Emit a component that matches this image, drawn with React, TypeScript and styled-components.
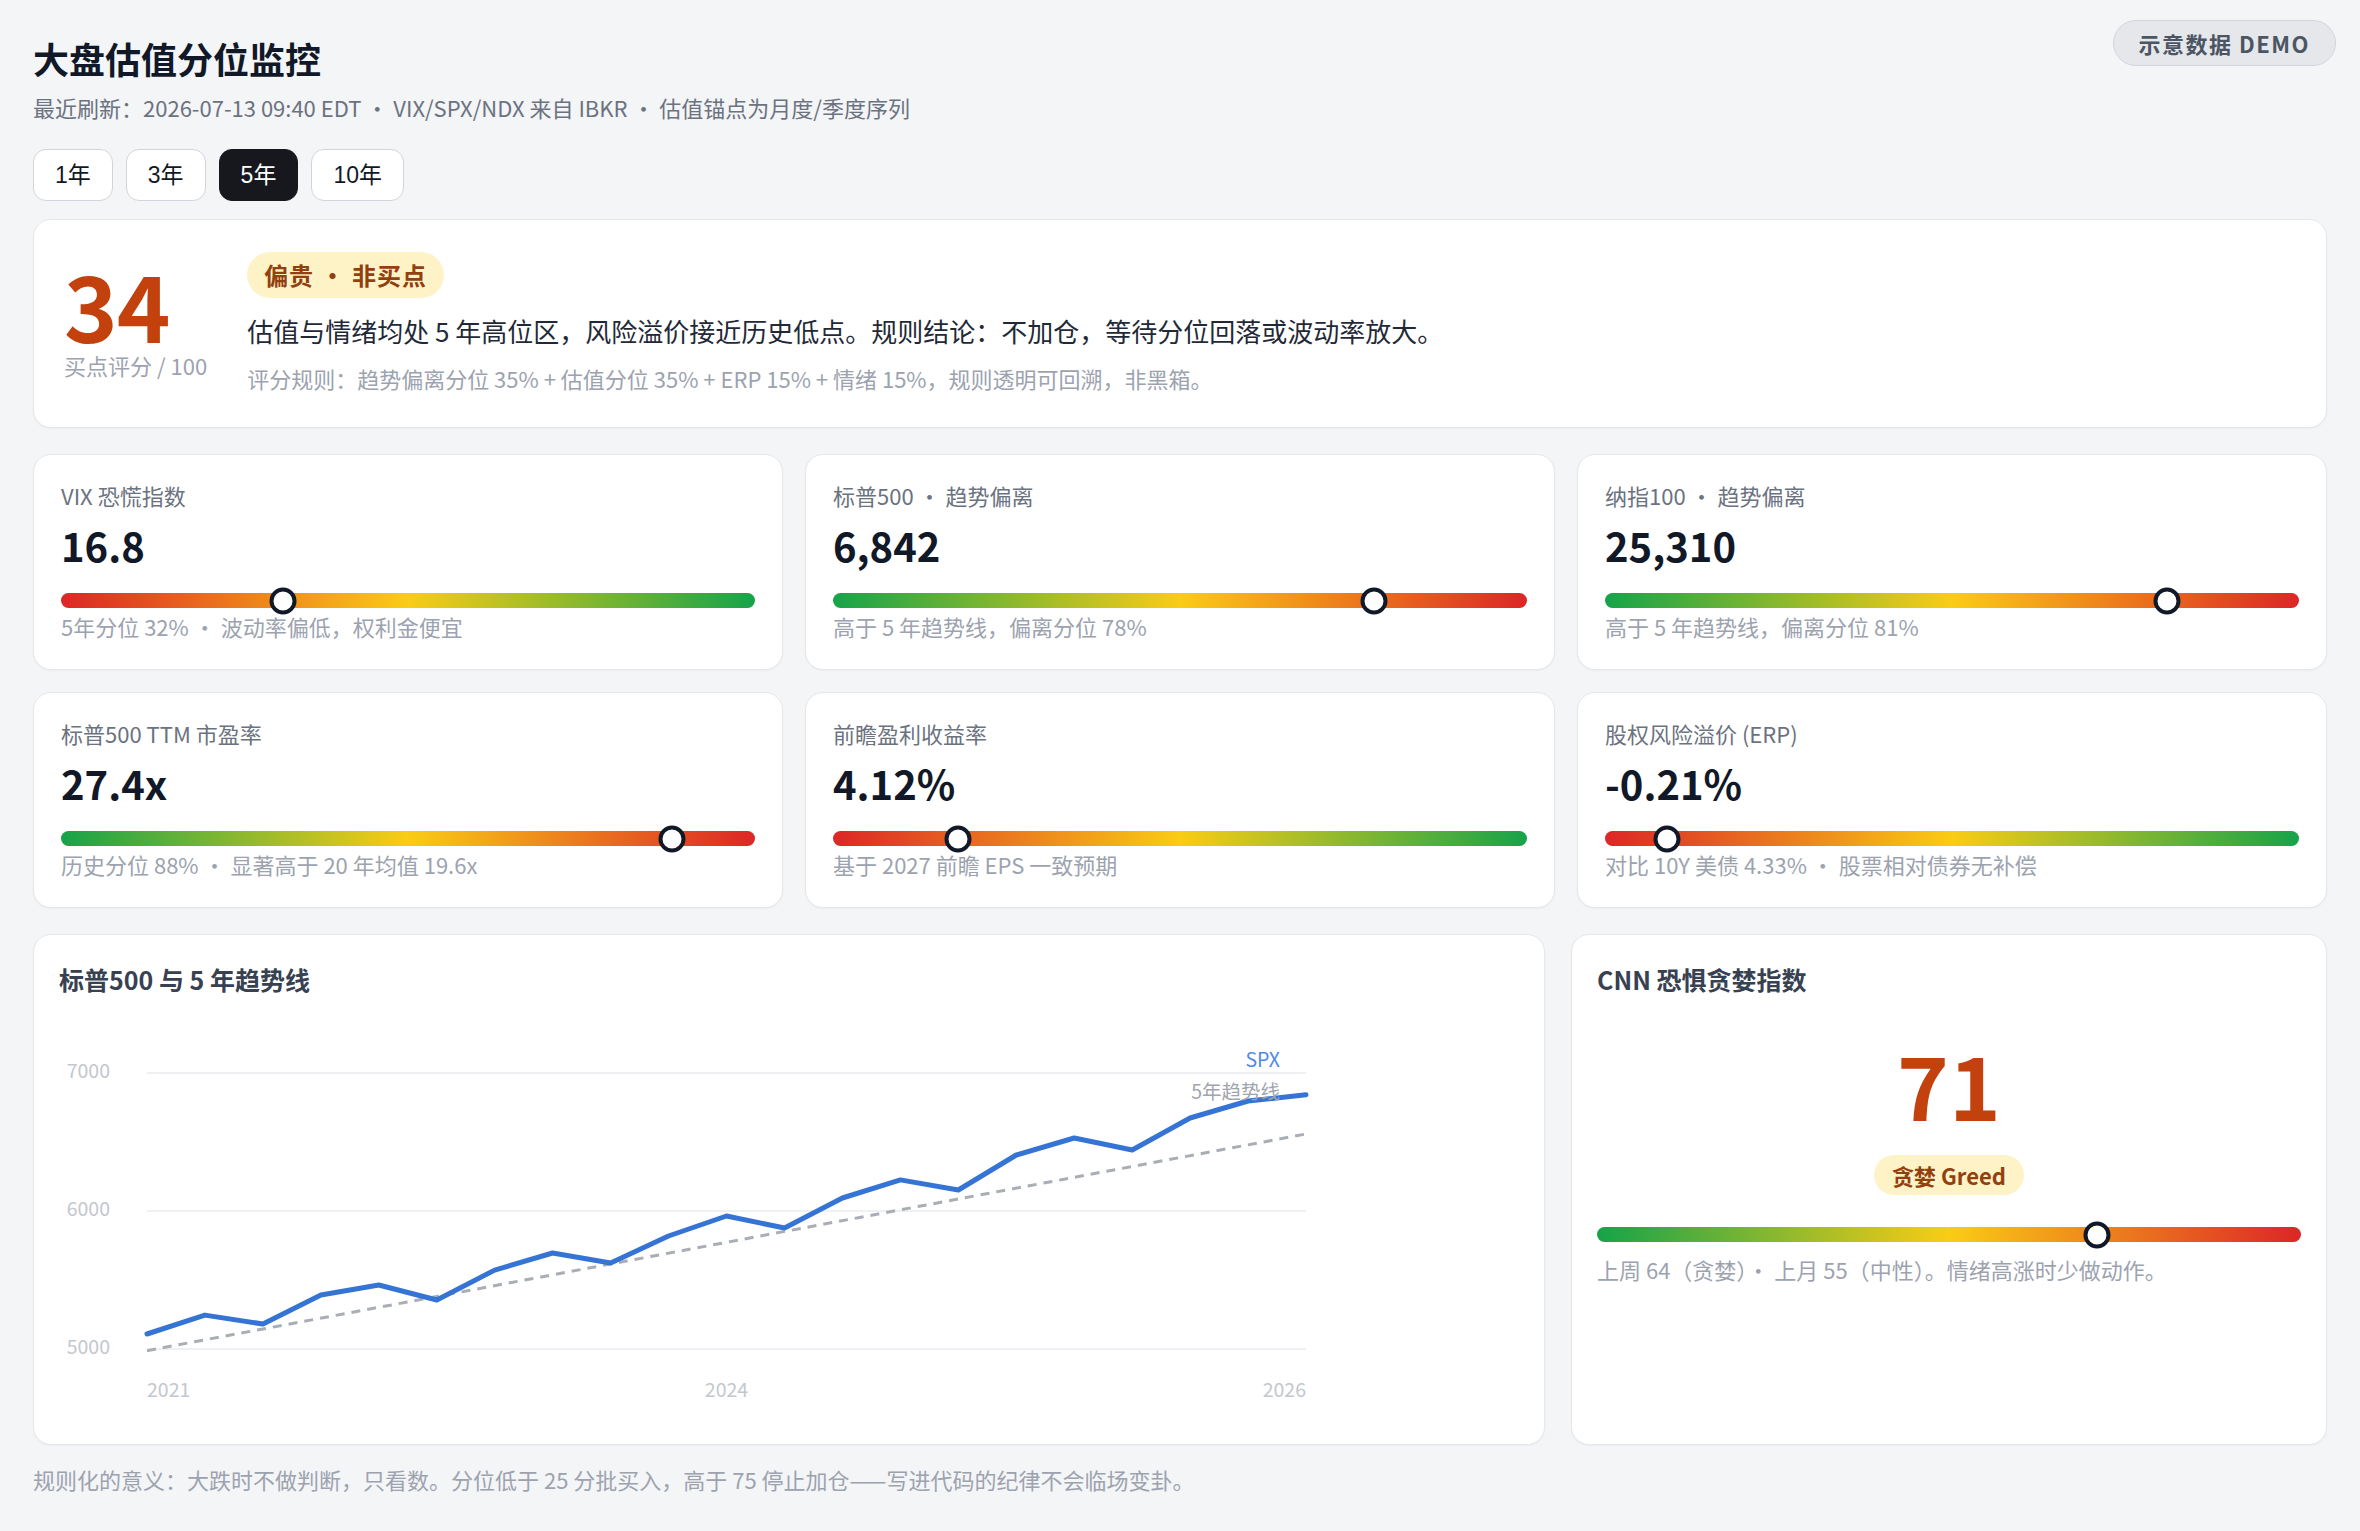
import styled, { createGlobalStyle } from "styled-components";

const GlobalStyle = createGlobalStyle`
  html, body {
    margin: 0;
    padding: 0;
    background: #f4f5f7;
  }
  body {
    font-family: "Noto Sans CJK SC", "Noto Sans", sans-serif;
    color: #111827;
  }
  * {
    box-sizing: border-box;
  }
`;

const Page = styled.div`
  position: relative;
  min-height: 1531px;
  padding: 35px 33px 40px;
`;

const Title = styled.h1`
  margin: 0;
  font-size: 36px;
  line-height: 47px;
  font-weight: 700;
  color: #111827;
`;

const Subtitle = styled.div`
  margin-top: 9px;
  font-size: 22px;
  line-height: 32px;
  color: #6b7280;
`;

const DemoBadge = styled.div`
  position: absolute;
  top: 20px;
  right: 24px;
  padding: 7px 25px;
  border-radius: 999px;
  border: 1.5px solid #d1d5db;
  background: #e5e7eb;
  color: #4b5563;
  font-size: 22px;
  line-height: 30px;
  font-weight: 700;
  letter-spacing: 1.5px;
`;

const PeriodRow = styled.div`
  display: flex;
  gap: 13px;
  margin-top: 26px;
`;

const PeriodButton = styled.button<{ $active?: boolean }>`
  font-family: "Liberation Sans", "Noto Sans CJK SC", sans-serif;
  font-size: 23px;
  line-height: 34px;
  padding: 8px 21px;
  border-radius: 13px;
  border: 1.5px solid ${(p) => (p.$active ? "#16181d" : "#d1d5db")};
  background: ${(p) => (p.$active ? "#16181d" : "#ffffff")};
  color: ${(p) => (p.$active ? "#ffffff" : "#111827")};
  cursor: pointer;
`;

const Card = styled.div`
  background: #ffffff;
  border: 1.5px solid #e5e7eb;
  border-radius: 18px;
  box-shadow: 0 1px 2px rgba(16, 24, 40, 0.04);
`;

const ScoreCard = styled(Card)`
  margin-top: 18px;
  display: flex;
  align-items: center;
  gap: 40px;
  padding: 32px 30px;
`;

const ScoreBlock = styled.div`
  display: flex;
  flex-direction: column;
  padding-bottom: 10px;
`;

const ScoreValue = styled.div`
  font-size: 91px;
  line-height: 94px;
  font-weight: 700;
  color: #c2410c;
  letter-spacing: -1px;
`;

const ScoreCaption = styled.div`
  font-size: 22px;
  line-height: 31px;
  color: #9ca3af;
`;

const ScoreText = styled.div`
  display: flex;
  flex-direction: column;
  align-items: flex-start;
`;

const Verdict = styled.span`
  padding: 8px 17px;
  border-radius: 999px;
  background: #fef3c7;
  color: #92400e;
  font-size: 24px;
  line-height: 30px;
  font-weight: 700;
  letter-spacing: 1px;
`;

const Summary = styled.div`
  margin-top: 14px;
  font-size: 26px;
  line-height: 38px;
  color: #1f2937;
`;

const RuleText = styled.div`
  margin-top: 12px;
  font-size: 22px;
  line-height: 33px;
  color: #9ca3af;
`;

const MetricGrid = styled.div`
  display: grid;
  grid-template-columns: repeat(3, 1fr);
  gap: 22px;
  margin-top: 26px;
`;

const MetricCard = styled(Card)`
  padding: 24px 27px 27px;
`;

const MetricLabel = styled.div`
  font-size: 22px;
  line-height: 32px;
  color: #6b7280;
`;

const MetricValue = styled.div`
  margin-top: 9px;
  font-size: 40px;
  line-height: 50px;
  font-weight: 700;
  color: #111827;
`;

const GaugeTrack = styled.div<{ $hotRight?: boolean }>`
  position: relative;
  margin-top: 23px;
  height: 15px;
  border-radius: 999px;
  background: ${(p) =>
    p.$hotRight
      ? "linear-gradient(90deg, #16a34a 0%, #facc15 50%, #dc2626 100%)"
      : "linear-gradient(90deg, #dc2626 0%, #facc15 50%, #16a34a 100%)"};
`;

const GaugeKnob = styled.span`
  position: absolute;
  top: 50%;
  width: 27px;
  height: 27px;
  border-radius: 50%;
  background: #ffffff;
  border: 4.5px solid #111827;
  transform: translate(-50%, -50%);
`;

const MetricNote = styled.div`
  margin-top: 2px;
  font-size: 22px;
  line-height: 32px;
  color: #9ca3af;
`;

const BottomGrid = styled.div`
  display: grid;
  grid-template-columns: 2fr 1fr;
  gap: 26px;
  margin-top: 26px;
`;

const PanelCard = styled(Card)`
  padding: 26px 25px 25px;
`;

const PanelTitle = styled.h2`
  margin: 0;
  font-size: 25px;
  line-height: 37px;
  font-weight: 700;
  color: #374151;
`;

const ChartSvg = styled.svg`
  display: block;
  margin-top: 33px;
  font-family: "Noto Sans CJK SC", sans-serif;
`;

const FearCenter = styled.div`
  display: flex;
  flex-direction: column;
  align-items: center;
  margin-top: 41px;
`;

const FearValue = styled.div`
  font-size: 88px;
  line-height: 88px;
  font-weight: 700;
  color: #c2410c;
`;

const MoodBadge = styled.span`
  margin-top: 28px;
  padding: 6px 18px;
  border-radius: 999px;
  background: #fef3c7;
  color: #92400e;
  font-size: 22px;
  line-height: 28px;
  font-weight: 700;
`;

const FearTrack = styled(GaugeTrack)`
  margin-top: 32px;
`;

const FearNote = styled.div`
  margin-top: 11px;
  font-size: 22px;
  line-height: 32px;
  color: #9ca3af;
`;

const Footnote = styled.p`
  margin: 18px 0 0;
  font-size: 22px;
  line-height: 33px;
  color: #9ca3af;
`;

type Metric = {
  label: string;
  value: string;
  pct: number;
  hotRight: boolean;
  note: string;
};

const metrics: Metric[] = [
  { label: "VIX 恐慌指数", value: "16.8", pct: 32, hotRight: false, note: "5年分位 32% · 波动率偏低，权利金便宜" },
  { label: "标普500 · 趋势偏离", value: "6,842", pct: 78, hotRight: true, note: "高于 5 年趋势线，偏离分位 78%" },
  { label: "纳指100 · 趋势偏离", value: "25,310", pct: 81, hotRight: true, note: "高于 5 年趋势线，偏离分位 81%" },
  { label: "标普500 TTM 市盈率", value: "27.4x", pct: 88, hotRight: true, note: "历史分位 88% · 显著高于 20 年均值 19.6x" },
  { label: "前瞻盈利收益率", value: "4.12%", pct: 18, hotRight: false, note: "基于 2027 前瞻 EPS 一致预期" },
  { label: "股权风险溢价 (ERP)", value: "-0.21%", pct: 9, hotRight: false, note: "对比 10Y 美债 4.33% · 股票相对债券无补偿" },
];

const spx = [
  5109, 5246, 5181, 5391, 5464, 5355, 5572, 5696, 5623, 5819, 5964, 5877, 6094, 6225, 6152, 6406, 6529,
  6442, 6674, 6797, 6842,
];

const CHART_LEFT = 88;
const CHART_RIGHT = 1247;
const px = (i: number) => CHART_LEFT + (i * (CHART_RIGHT - CHART_LEFT)) / (spx.length - 1);
const py = (v: number) => 42 + (7000 - v) * 0.138;

const Gauge = ({ pct, hotRight }: { pct: number; hotRight: boolean }) => (
  <GaugeTrack $hotRight={hotRight}>
    <GaugeKnob style={{ left: `${pct}%` }} />
  </GaugeTrack>
);

const TrendChart = () => {
  const line = spx.map((v, i) => `${px(i).toFixed(1)},${py(v).toFixed(1)}`).join(" ");
  return (
    <ChartSvg width={1260} height={388} viewBox="0 0 1260 388">
      {[7000, 6000, 5000].map((v) => (
        <g key={v}>
          <line x1={CHART_LEFT} x2={CHART_RIGHT} y1={py(v)} y2={py(v)} stroke="#eef0f3" strokeWidth={2} />
          <text x={51} y={py(v) + 5} textAnchor="end" fontSize={19.5} fill="#c3c7ce">
            {v}
          </text>
        </g>
      ))}
      <line
        x1={CHART_LEFT}
        y1={py(4988)}
        x2={CHART_RIGHT}
        y2={py(6558)}
        stroke="#a9adb4"
        strokeWidth={3}
        strokeDasharray="9 7"
      />
      <polyline points={line} fill="none" stroke="#3574d4" strokeWidth={5} strokeLinejoin="round" strokeLinecap="round" />
      <text x={1221} y={36} textAnchor="end" fontSize={19.5} fill="#4f8ae6">
        SPX
      </text>
      <text x={1221} y={68} textAnchor="end" fontSize={19.5} fill="#a0a5ad">
        5年趋势线
      </text>
      <text x={CHART_LEFT} y={366} fontSize={19.5} fill="#c3c7ce">
        2021
      </text>
      <text x={px(10)} y={366} textAnchor="middle" fontSize={19.5} fill="#c3c7ce">
        2024
      </text>
      <text x={CHART_RIGHT} y={366} textAnchor="end" fontSize={19.5} fill="#c3c7ce">
        2026
      </text>
    </ChartSvg>
  );
};

const App = () => {
  return (
    <>
      <GlobalStyle />
      <Page>
        <DemoBadge>示意数据 DEMO</DemoBadge>
        <Title>大盘估值分位监控</Title>
        <Subtitle>最近刷新：2026-07-13 09:40 EDT · VIX/SPX/NDX 来自 IBKR · 估值锚点为月度/季度序列</Subtitle>
        <PeriodRow>
          {["1年", "3年", "5年", "10年"].map((p) => (
            <PeriodButton key={p} $active={p === "5年"}>
              {p}
            </PeriodButton>
          ))}
        </PeriodRow>

        <ScoreCard>
          <ScoreBlock>
            <ScoreValue>34</ScoreValue>
            <ScoreCaption>买点评分 / 100</ScoreCaption>
          </ScoreBlock>
          <ScoreText>
            <Verdict>偏贵 · 非买点</Verdict>
            <Summary>估值与情绪均处 5 年高位区，风险溢价接近历史低点。规则结论：不加仓，等待分位回落或波动率放大。</Summary>
            <RuleText>评分规则：趋势偏离分位 35% + 估值分位 35% + ERP 15% + 情绪 15%，规则透明可回溯，非黑箱。</RuleText>
          </ScoreText>
        </ScoreCard>

        <MetricGrid>
          {metrics.map((m) => (
            <MetricCard key={m.label}>
              <MetricLabel>{m.label}</MetricLabel>
              <MetricValue>{m.value}</MetricValue>
              <Gauge pct={m.pct} hotRight={m.hotRight} />
              <MetricNote>{m.note}</MetricNote>
            </MetricCard>
          ))}
        </MetricGrid>

        <BottomGrid>
          <PanelCard>
            <PanelTitle>标普500 与 5 年趋势线</PanelTitle>
            <TrendChart />
          </PanelCard>
          <PanelCard>
            <PanelTitle>CNN 恐惧贪婪指数</PanelTitle>
            <FearCenter>
              <FearValue>71</FearValue>
              <MoodBadge>贪婪 Greed</MoodBadge>
            </FearCenter>
            <FearTrack $hotRight>
              <GaugeKnob style={{ left: "71%" }} />
            </FearTrack>
            <FearNote>上周 64（贪婪）· 上月 55（中性）。情绪高涨时少做动作。</FearNote>
          </PanelCard>
        </BottomGrid>

        <Footnote>规则化的意义：大跌时不做判断，只看数。分位低于 25 分批买入，高于 75 停止加仓——写进代码的纪律不会临场变卦。</Footnote>
      </Page>
    </>
  );
};

export default App;
